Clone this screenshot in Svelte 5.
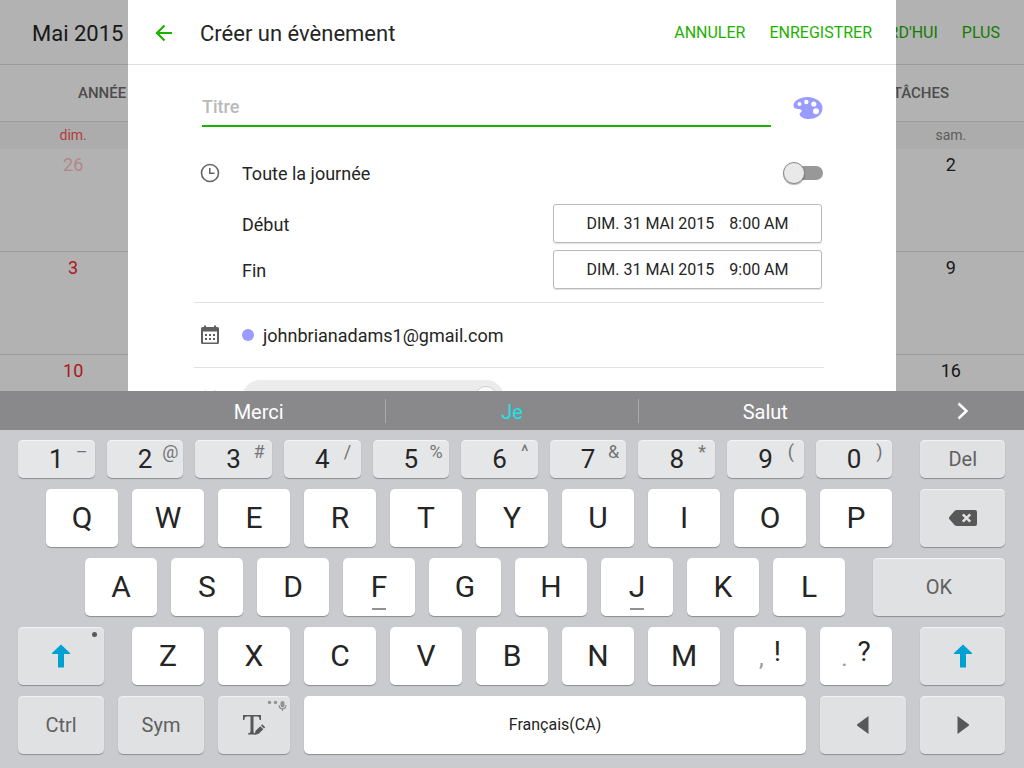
<script>
  let title = $state('');
  let allDay = $state(false);

  const weeks = [
    { sunday: '26', saturday: '2', otherMonth: true },
    { sunday: '3', saturday: '9' },
    { sunday: '10', saturday: '16' },
  ];

  const times = [
    { id: 'start', label: 'Début', date: 'DIM. 31 MAI 2015', time: '8:00 AM' },
    { id: 'end', label: 'Fin', date: 'DIM. 31 MAI 2015', time: '9:00 AM' },
  ];

  const suggestions = ['Merci', 'Je', 'Salut'];

  // Digit and its long-press symbol
  const digits = [
    ['1', '–'], ['2', '@'], ['3', '#'], ['4', '/'], ['5', '%'],
    ['6', '^'], ['7', '&'], ['8', '*'], ['9', '('], ['0', ')'],
  ];

  const topLetters = [...'QWERTYUIOP'];
  const homeLetters = [...'ASDFGHJKL'];
  const bottomLetters = [...'ZXCVBNM'];
  const homeMarks = ['F', 'J'];

  const type = (char) => {
    title += char;
  };

  const erase = () => {
    title = title.slice(0, -1);
  };
</script>

{#snippet shiftIcon()}
  <svg width="18" height="24" viewBox="0 0 18 24" aria-hidden="true">
    <path d="M9 0.500L18 9V10H12V23.500H6V10H0V9Z" fill="#00a0d2" />
  </svg>
{/snippet}

<div class="page">
  <div class="stage">
    <div class="calendar">
      <header class="bar calendar-bar">
        <h1>Mai 2015</h1>
        <div class="actions">
          <button type="button">AUJOURD'HUI</button>
          <button type="button">PLUS</button>
        </div>
      </header>
      <nav class="tabs">
        <a href="#annee">ANNÉE</a>
        <a href="#taches">TÂCHES</a>
      </nav>
      <table>
        <thead>
          <tr>
            <th class="sunday">dim.</th>
            <th colspan="5"></th>
            <th>sam.</th>
          </tr>
        </thead>
        <tbody>
          {#each weeks as week}
            <tr>
              <td class="sunday" class:faded={week.otherMonth}>{week.sunday}</td>
              <td colspan="5"></td>
              <td>{week.saturday}</td>
            </tr>
          {/each}
        </tbody>
      </table>
    </div>

    <div class="scrim"></div>

    <div class="dialog" role="dialog" aria-labelledby="dialog-title">
      <header class="bar dialog-bar">
        <button type="button" class="back" aria-label="Retour">
          <svg width="18" height="18" viewBox="0 0 18 18" fill="none" stroke="#1cb100" stroke-width="2.200">
            <path d="M17 9H2.500M9.500 1.500L2 9L9.500 16.500" />
          </svg>
        </button>
        <h2 id="dialog-title">Créer un évènement</h2>
        <div class="actions">
          <button type="button">ANNULER</button>
          <button type="button">ENREGISTRER</button>
        </div>
      </header>

      <form class="form" onsubmit={(e) => e.preventDefault()}>
        <div class="title-row">
          <input class="title-input" type="text" placeholder="Titre" aria-label="Titre" bind:value={title} />
          <button type="button" class="palette" aria-label="Couleur">
            <svg width="30" height="24" viewBox="0 0 30 24" aria-hidden="true">
              <path
                d="M14.500 1C22.800 1 29.500 6 29.500 12.200C29.500 18.400 23.200 23 16 23C11 23 6.800 21 6.600 18C6.500 16.400 9.600 16 8.600 14.200C7.600 12.400 0.500 14.200 0.500 9.500C0.500 4.800 7.200 1 14.500 1Z"
                fill="#9a9bff"
              />
              <g fill="#fff">
                <circle cx="6.500" cy="8" r="2" />
                <circle cx="13.300" cy="6" r="2.200" />
                <circle cx="20.800" cy="8" r="2.600" />
                <circle cx="23" cy="15.300" r="3" />
              </g>
            </svg>
          </button>
        </div>

        <section class="when">
          <div class="row all-day">
            <svg class="row-icon" width="20" height="20" viewBox="0 0 20 20" fill="none" stroke="#666" aria-hidden="true">
              <circle cx="10" cy="10" r="8.500" stroke-width="1.600" />
              <path d="M9.800 5V10.300H14.500" stroke-width="1.600" />
            </svg>
            <label for="all-day">Toute la journée</label>
            <input id="all-day" class="switch" type="checkbox" role="switch" bind:checked={allDay} />
          </div>
          {#each times as item}
            <div class="row time-row">
              <span class="row-text" id="{item.id}-label">{item.label}</span>
              <button type="button" class="time" aria-describedby="{item.id}-label">
                <span>{item.date}</span>
                <span>{item.time}</span>
              </button>
            </div>
          {/each}
        </section>

        <section class="row account">
          <svg class="row-icon" width="20" height="20" viewBox="0 0 20 20" aria-hidden="true">
            <path d="M4 0.500H6V2H14V0.500H16V2H17.500Q19 2 19 3.500V17.500Q19 19 17.500 19H2.500Q1 19 1 17.500V3.500Q1 2 2.500 2H4Z" fill="#606060" />
            <path d="M3 6.500H17V17.500H3Z" fill="#fff" />
            <path d="M5 9H7V11H5ZM9 9H11V11H9ZM13 9H15V11H13ZM5 13H7V15H5ZM9 13H11V15H9ZM13 13H15V15H13Z" fill="#606060" />
          </svg>
          <span class="dot"></span>
          <span class="row-text">johnbrianadams1@gmail.com</span>
        </section>

        <section class="row guests">
          <svg class="row-icon" width="20" height="20" viewBox="0 0 20 20" fill="none" stroke="#777" stroke-width="1.500" aria-hidden="true">
            <circle cx="5.500" cy="6.500" r="3" />
            <circle cx="14.500" cy="6.500" r="3" />
            <path d="M0.800 18V15Q0.800 12 5.500 12T10 15V18ZM10 15Q10.500 12 14.500 12T19.200 15V18H10" />
          </svg>
          <span class="chip"><span class="avatar"></span></span>
        </section>
      </form>
    </div>
  </div>

  <div class="keyboard">
    <div class="suggestions">
      {#each suggestions as word}
        <button type="button" class:best={word === 'Je'}>{word}</button>
      {/each}
      <button type="button" class="more" aria-label="Plus de suggestions">
        <svg width="12" height="18" viewBox="0 0 12 18" fill="none" stroke="#fff" stroke-width="2.500">
          <path d="M1.500 1.500L9.500 9L1.500 16.500" />
        </svg>
      </button>
    </div>

    <div class="keys">
      <div class="key-row digits">
        {#each digits as [digit, symbol]}
          <button type="button" class="key digit" onclick={() => type(digit)}>
            {digit}<span class="symbol">{symbol}</span>
          </button>
        {/each}
        <button type="button" class="key fn side">Del</button>
      </div>

      <div class="key-row top">
        {#each topLetters as letter}
          <button type="button" class="key" onclick={() => type(letter)}>{letter}</button>
        {/each}
        <button type="button" class="key fn side" aria-label="Effacer" onclick={erase}>
          <svg width="28" height="16" viewBox="0 0 28 16">
            <path d="M8 0H26Q28 0 28 2V14Q28 16 26 16H8Q6.500 16 5.500 15L0 8.800V7.200L5.500 1Q6.500 0 8 0Z" fill="#585858" />
            <path d="M13.800 4.300L21.200 11.700M21.200 4.300L13.800 11.700" stroke="#e0e1e3" stroke-width="2.500" />
          </svg>
        </button>
      </div>

      <div class="key-row home">
        {#each homeLetters as letter}
          <button type="button" class="key" class:mark={homeMarks.includes(letter)} onclick={() => type(letter)}>{letter}</button>
        {/each}
        <button type="button" class="key fn side ok">OK</button>
      </div>

      <div class="key-row">
        <button type="button" class="key fn wide shift" aria-label="Maj">{@render shiftIcon()}</button>
        {#each bottomLetters as letter}
          <button type="button" class="key" onclick={() => type(letter)}>{letter}</button>
        {/each}
        <button type="button" class="key pair" onclick={() => type(',')}>
          <span class="minor">,</span><span class="major">!</span>
        </button>
        <button type="button" class="key pair" onclick={() => type('.')}>
          <span class="minor">.</span><span class="major">?</span>
        </button>
        <button type="button" class="key fn side" aria-label="Maj">{@render shiftIcon()}</button>
      </div>

      <div class="key-row">
        <button type="button" class="key fn wide">Ctrl</button>
        <button type="button" class="key fn wide">Sym</button>
        <button type="button" class="key fn" aria-label="Écriture manuscrite">
          <svg width="24" height="22" viewBox="0 0 24 22" fill="#585858">
            <path d="M1 1H19V6H17.600Q17.400 2.600 15.500 2.600H11.500V17.500Q11.500 19.200 13 19.400V20.500H6V19.400Q8.500 19.200 8.500 17.500V2.600H4.500Q2.600 2.600 2.400 6H1Z" />
            <path d="M12.500 21L13.600 16.700L18.300 12.200L21.300 15.200L16.700 19.800ZM19 11.500L20.200 10.300L23.200 13.300L22 14.500Z" />
          </svg>
          <svg class="mic" width="20" height="12" viewBox="0 0 20 12" fill="#929292">
            <circle cx="2.500" cy="2.500" r="1.700" />
            <circle cx="8.500" cy="2.500" r="1.700" />
            <rect x="13.500" y="1" width="4" height="6.500" rx="2" />
            <path d="M12.200 5V5.500A3.300 3.300 0 0 0 18.800 5.500V5M15.500 8.800V11" fill="none" stroke="#929292" stroke-width="1.200" />
          </svg>
        </button>
        <button type="button" class="key space" onclick={() => type(' ')}>Français(CA)</button>
        <button type="button" class="key fn wide" aria-label="Gauche">
          <svg width="12" height="18" viewBox="0 0 12 18"><path d="M11.500 0V18L0 9.600V8.400Z" fill="#585858" /></svg>
        </button>
        <button type="button" class="key fn arrow" aria-label="Droite">
          <svg width="12" height="18" viewBox="0 0 12 18"><path d="M0.500 0V18L12 9.600V8.400Z" fill="#585858" /></svg>
        </button>
      </div>
    </div>
  </div>
</div>

<style>
  :global(body) {
    margin: 0;
    background: #cacbcf;
  }

  .page {
    display: flex;
    flex-direction: column;
    height: 100vh;
    font-family: Roboto, 'Liberation Sans', sans-serif;
    color: #252525;
  }

  button,
  input {
    font-family: inherit;
    box-sizing: border-box;
    margin: 0;
  }

  button {
    padding: 0;
    border: none;
    background: none;
    color: inherit;
    cursor: pointer;
  }

  h1,
  h2 {
    margin: 0;
    padding-top: 2px;
    font-size: 22px;
    line-height: 28px;
    font-weight: 400;
  }

  svg {
    display: block;
    flex-shrink: 0;
  }

  .stage {
    display: grid;
    grid-template: minmax(0, 1fr) / minmax(0, 1fr);
    flex: 1;
    min-height: 0;
    overflow: hidden;
    background: #fff;
  }

  .stage > * {
    grid-area: 1 / 1;
  }

  .scrim {
    background: rgba(0, 0, 0, 0.3);
  }

  .bar {
    display: flex;
    align-items: center;
    height: 62px;
    padding-top: 2px;
    padding-right: 24px;
    border-bottom: 1px solid #dedede;
  }

  .actions {
    display: flex;
    gap: 24px;
    margin-left: auto;
  }

  .actions button {
    font-size: 16px;
    line-height: 24px;
    color: #1cb100;
  }

  /* Calendar behind the dialog */
  .calendar-bar {
    padding-left: 32px;
  }

  .tabs {
    display: flex;
    justify-content: space-between;
    align-items: center;
    height: 56px;
    padding: 0 75px 0 78px;
    border-bottom: 1px solid #dedede;
  }

  .tabs a {
    font-size: 15px;
    font-weight: 500;
    line-height: 20px;
    color: #6e6e6e;
    text-decoration: none;
  }

  table {
    width: 100%;
    table-layout: fixed;
    border-collapse: collapse;
  }

  th {
    height: 25px;
    padding: 0 0 2px;
    background: #f7f7f7;
    font-size: 14px;
    font-weight: 400;
    color: #858585;
  }

  td {
    height: 87px;
    padding: 5px 0 10px;
    border-bottom: 1px solid #dedede;
    font-size: 18px;
    line-height: 22px;
    text-align: center;
    vertical-align: top;
  }

  .sunday {
    color: #f8262b;
  }

  th.sunday {
    color: #ff555b;
  }

  .faded {
    color: #ffc2c5;
  }

  /* Event dialog */
  .dialog {
    width: 75%;
    justify-self: center;
    overflow: hidden;
    background: #fff;
  }

  .dialog-bar {
    padding-left: 27px;
  }

  .back {
    margin-right: 27px;
  }

  .form {
    padding: 0 72px 0 66px;
    font-size: 18px;
    line-height: 24px;
  }

  .title-row {
    display: flex;
    align-items: center;
    gap: 22px;
    padding: 23px 1px 0 8px;
  }

  .title-input {
    flex: 1;
    min-width: 0;
    height: 39px;
    padding: 0;
    border: none;
    border-bottom: 2px solid #1cb100;
    outline: none;
    background: none;
    font-size: 18px;
    font-weight: 500;
    color: #252525;
  }

  .title-input::placeholder {
    color: #b9b9b9;
    opacity: 1;
  }

  .row {
    display: flex;
    align-items: center;
  }

  .row label,
  .row-text {
    padding-top: 2px;
  }

  .row-icon {
    width: 20px;
    margin: 0 22px 0 6px;
  }

  .when {
    padding-bottom: 13px;
    border-bottom: 1px solid #e2e2e2;
  }

  .all-day {
    height: 48px;
    margin: 22px 0 7px;
    padding-right: 1px;
  }

  .switch {
    appearance: none;
    position: relative;
    width: 40px;
    height: 22px;
    margin-left: auto;
    cursor: pointer;
  }

  .switch::before {
    content: '';
    position: absolute;
    inset: 4px 0 4px 6px;
    border-radius: 7px;
    background: #989898;
  }

  .switch::after {
    content: '';
    position: absolute;
    top: 0;
    left: 0;
    box-sizing: border-box;
    width: 22px;
    height: 22px;
    border: 1px solid #8a8a8a;
    border-radius: 50%;
    background: #e9e9e9;
    box-shadow: 0 1px 1px rgba(0, 0, 0, 0.3);
  }

  .switch:checked::before {
    background: #8fd881;
  }

  .switch:checked::after {
    left: 18px;
    background: #1cb100;
  }

  .time-row {
    justify-content: space-between;
    padding: 0 2px 0 48px;
  }

  .time-row + .time-row {
    margin-top: 7px;
  }

  .time {
    display: flex;
    align-items: center;
    justify-content: center;
    gap: 15px;
    width: 269px;
    height: 39px;
    border: 1px solid #b9b9b9;
    border-radius: 3px;
    font-size: 16px;
    box-shadow: 0 1px 1px rgba(0, 0, 0, 0.12);
  }

  .account {
    height: 64px;
    border-bottom: 1px solid #e2e2e2;
  }

  .dot {
    width: 12px;
    height: 12px;
    margin-right: 9px;
    border-radius: 50%;
    background: #9a9bff;
  }

  .guests {
    padding-top: 12px;
  }

  .chip {
    display: flex;
    justify-content: flex-end;
    align-items: center;
    box-sizing: border-box;
    width: 262px;
    height: 36px;
    padding: 0 6px;
    border-radius: 18px;
    background: #ececec;
  }

  .avatar {
    box-sizing: border-box;
    width: 24px;
    height: 24px;
    border: 1px solid #cfcfcf;
    border-radius: 50%;
    background: #fafafa;
  }

  /* On-screen keyboard */
  .suggestions {
    display: grid;
    grid-template-columns: repeat(3, 1fr) 132px;
    align-items: center;
    height: 39px;
    padding-left: 132px;
    background: #89898b;
    color: #fff;
  }

  .suggestions button {
    height: 24px;
    padding-top: 2px;
    font-size: 20px;
    line-height: 22px;
  }

  .suggestions button:nth-child(2) {
    border: solid #a9a9aa;
    border-width: 0 1px;
  }

  .suggestions .best {
    color: #1de0ea;
  }

  .suggestions .more {
    display: flex;
    align-items: center;
    justify-content: center;
    padding: 0 0 0 10px;
  }

  .keys {
    display: flex;
    flex-direction: column;
    gap: 11px;
    padding: 10px 19px 14px 18px;
    background: #cacbcf;
  }

  .key-row {
    display: flex;
    gap: 14px;
    height: 58px;
  }

  .digits {
    gap: 12px;
    height: 38px;
  }

  .top {
    padding-left: 28px;
  }

  .home {
    padding-left: 67px;
  }

  .key {
    display: flex;
    align-items: center;
    justify-content: center;
    flex: 72 1 0;
    min-width: 0;
    position: relative;
    border-radius: 5px;
    background: #fff;
    box-shadow: 0 1px 1px #8c8d90;
    font-size: 30px;
    line-height: 36px;
  }

  .key:active {
    background: #d3eef6;
  }

  .digit {
    flex-grow: 77;
    background: #e5e6e8;
    box-shadow: inset 0 1px 1px #f5f5f6, 0 1px 1px #8c8d90;
    font-size: 26px;
  }

  .symbol {
    position: absolute;
    top: 2px;
    right: 4px;
    width: 18px;
    font-size: 18px;
    line-height: 20px;
    text-align: center;
    color: #747474;
  }

  .fn {
    background: #e0e1e3;
    box-shadow: inset 0 1px 1px #f3f3f4, 0 1px 1px #8c8d90;
    font-size: 20px;
    color: #606060;
  }

  .wide {
    flex-grow: 86;
  }

  .side {
    flex-grow: 85;
    margin-left: 14px;
  }

  .digits .side {
    margin-left: 16px;
  }

  .arrow {
    flex-grow: 85;
  }

  .ok {
    flex-grow: 132;
  }

  .shift {
    margin-right: 14px;
  }

  .shift::after {
    content: '';
    position: absolute;
    top: 5px;
    right: 7px;
    width: 5px;
    height: 5px;
    border-radius: 50%;
    background: #585858;
  }

  .mark::after {
    content: '';
    position: absolute;
    bottom: 6px;
    left: calc(50% - 7px);
    width: 14px;
    height: 2px;
    background: #929292;
  }

  .pair {
    gap: 10px;
    font-size: 28px;
  }

  .minor {
    padding-top: 4px;
    font-size: 24px;
    color: #999;
  }

  .major {
    padding-bottom: 8px;
  }

  .mic {
    position: absolute;
    top: 4px;
    right: 3px;
  }

  .space {
    flex-grow: 502;
    font-size: 16px;
  }
</style>
